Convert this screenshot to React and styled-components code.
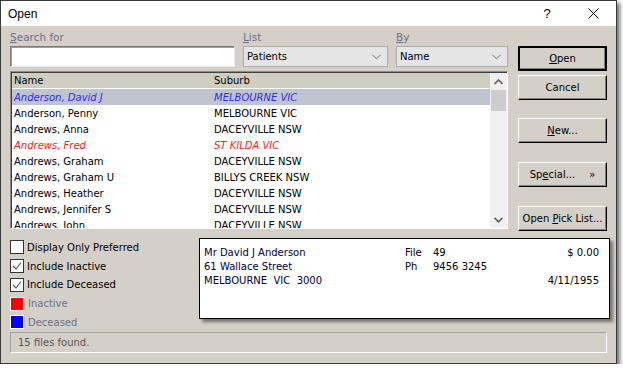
import React from "react"
import styled, { createGlobalStyle } from "styled-components"

const GlobalStyle = createGlobalStyle`
  body {
    margin: 0;
    background: #ffffff;
    font-family: "DejaVu Sans", "Liberation Sans", sans-serif;
    font-size: 10px;
  }
`

const Window = styled.div`
  width: 615px;
  height: 362px;
  border: 1px solid #3a3a3a;
  background: #d4d0c8;
  box-shadow: 3px 3px 4px rgba(0, 0, 0, 0.55);
  display: flex;
  flex-direction: column;
  overflow: hidden;
`

const TitleBar = styled.div`
  height: 25px;
  flex-shrink: 0;
  background: #ffffff;
  display: flex;
  align-items: center;
  padding: 0 0 0 7px;
  font-family: "Liberation Sans", sans-serif;
  font-size: 12px;
  color: #000;
`

const Title = styled.div`
  flex: 1;
`

const TitleButton = styled.div`
  width: 46px;
  height: 25px;
  display: flex;
  align-items: center;
  justify-content: center;
  font-size: 13px;
`

const Body = styled.div`
  padding: 5px 9px 0 9px;
  display: flex;
  flex-direction: column;
`

const TopArea = styled.div`
  display: grid;
  grid-template-columns: 498px 89px;
  column-gap: 10px;
`

const LeftCol = styled.div`
  display: flex;
  flex-direction: column;
`

const Filters = styled.div`
  display: flex;
  gap: 8px;
`

const Field = styled.div`
  display: flex;
  flex-direction: column;
  width: ${p => p.w}px;
`

const Label = styled.div`
  color: #6a6f8c;
  height: 15px;
  line-height: 13px;
  font-size: 10.5px;
  span {
    text-decoration: underline;
  }
`

const TextInput = styled.div`
  height: 19px;
  background: #fff;
  border: 1px solid #7a7a7a;
  border-right-color: #e8e8e8;
  border-bottom-color: #e8e8e8;
  box-shadow: inset 1px 1px 0 #a0a0a0;
`

const Select = styled.div`
  height: 19px;
  background: #e5e5e5;
  border: 1px solid #acacac;
  display: flex;
  align-items: center;
  justify-content: space-between;
  padding: 0 6px 0 3px;
  color: #000;
`

const ListBox = styled.div`
  margin-top: 4px;
  height: 156px;
  border: 1px solid #8a8a8a;
  border-right-color: #ffffff;
  border-bottom-color: #ffffff;
  box-shadow: inset 1px 1px 0 #404040;
  background: #fff;
  display: flex;
  overflow: hidden;
`

const ListMain = styled.div`
  flex: 1;
  display: flex;
  flex-direction: column;
  padding: 1px 0 0 1px;
  overflow: hidden;
`

const HeaderRow = styled.div`
  display: grid;
  grid-template-columns: 200px 1fr;
  height: 15px;
  flex-shrink: 0;
  align-items: center;
  background: #cfcfc1;
  padding-left: 2px;
  border-bottom: 1px solid #fff;
`

const Row = styled.div`
  display: grid;
  grid-template-columns: 200px 1fr;
  height: 16px;
  flex-shrink: 0;
  align-items: center;
  padding-left: 2px;
  background: ${p => (p.selected ? "#c0c4ce" : "transparent")};
  color: ${p => p.color || "#000"};
  font-style: ${p => (p.color ? "italic" : "normal")};
  white-space: nowrap;
`

const ScrollBar = styled.div`
  width: 17px;
  background: #f0f0f0;
  display: flex;
  flex-direction: column;
  align-items: center;
  margin-top: 1px;
`

const ScrollArrow = styled.div`
  height: 17px;
  width: 17px;
  flex-shrink: 0;
  display: flex;
  align-items: center;
  justify-content: center;
`

const Thumb = styled.div`
  width: 15px;
  height: 21px;
  flex-shrink: 0;
  background: #cdcdcd;
`

const ScrollSpace = styled.div`
  flex: 1;
`

const Buttons = styled.div`
  display: flex;
  flex-direction: column;
  padding-top: 15px;
`

const Button = styled.div`
  height: 25px;
  box-sizing: border-box;
  margin-top: ${p => p.gap || 0}px;
  background: #d4d0c8;
  border: ${p => (p.primary ? "2px solid #000" : "1px solid #fff")};
  border-right-color: #000;
  border-bottom-color: #000;
  box-shadow: inset -1px -1px 0 #808080;
  display: flex;
  align-items: center;
  justify-content: center;
  gap: 14px;
  color: #000;
  span {
    text-decoration: underline;
  }
`

const BottomArea = styled.div`
  display: grid;
  grid-template-columns: 189px 411px;
  margin-top: 7px;
`

const Options = styled.div`
  display: flex;
  flex-direction: column;
`

const OptionRow = styled.div`
  display: flex;
  align-items: center;
  height: 18.75px;
  gap: 3px;
  color: ${p => (p.muted ? "#6a6f8c" : "#000")};
`

const CheckBox = styled.div`
  width: 12px;
  height: 12px;
  border: 1px solid #333;
  background: #fff;
  display: flex;
  align-items: center;
  justify-content: center;
`

const Swatch = styled.div`
  width: 12px;
  height: 12px;
  background: ${p => p.color};
  border: 1px solid #fff;
  margin-right: 1px;
`

const InfoPanel = styled.div`
  box-sizing: border-box;
  height: 81px;
  background: #fff;
  border: 1px solid #000;
  box-shadow: 3px 3px 3px rgba(0, 0, 0, 0.45);
  display: grid;
  grid-template-columns: 201px 28px 1fr auto;
  grid-template-rows: repeat(3, 14px);
  padding: 7px 10px 0 4px;
  align-content: start;
`

const Cell = styled.div`
  color: ${p => (p.navy ? "#00003c" : "#000")};
  text-align: ${p => (p.right ? "right" : "left")};
  white-space: pre;
  line-height: 14px;
`

const StatusBar = styled.div`
  height: 19px;
  width: 588px;
  border: 1px solid #a0a0a0;
  border-right-color: #fff;
  border-bottom-color: #fff;
  display: flex;
  align-items: center;
  padding-left: 7px;
  color: #555;
`

const Chevron = ({ dark }) => (
  <svg width="9" height="6" viewBox="0 0 9 6">
    <path d="M0.5 0.8 L4.5 4.8 L8.5 0.8" fill="none" stroke={dark ? "#606060" : "#707070"} strokeWidth={dark ? 1.6 : 1} />
  </svg>
)

const UpChevron = () => (
  <svg width="9" height="6" viewBox="0 0 9 6">
    <path d="M0.5 5 L4.5 1 L8.5 5" fill="none" stroke="#606060" strokeWidth="1.6" />
  </svg>
)

const Tick = () => (
  <svg width="10" height="10" viewBox="0 0 10 10">
    <path d="M1 5 L4 8 L9 1.5" fill="none" stroke="#555" strokeWidth="1.1" />
  </svg>
)

const patients = [
  { name: "Anderson, David J", suburb: "MELBOURNE VIC", color: "#2a2aff", selected: true },
  { name: "Anderson, Penny", suburb: "MELBOURNE VIC" },
  { name: "Andrews, Anna", suburb: "DACEYVILLE NSW" },
  { name: "Andrews, Fred", suburb: "ST KILDA VIC", color: "#ff1a1a" },
  { name: "Andrews, Graham", suburb: "DACEYVILLE NSW" },
  { name: "Andrews, Graham U", suburb: "BILLYS CREEK NSW" },
  { name: "Andrews, Heather", suburb: "DACEYVILLE NSW" },
  { name: "Andrews, Jennifer S", suburb: "DACEYVILLE NSW" },
  { name: "Andrews, John", suburb: "DACEYVILLE NSW" },
]

const App = () => (
  <>
    <GlobalStyle />
    <Window>
      <TitleBar>
        <Title>Open</Title>
        <TitleButton>?</TitleButton>
        <TitleButton>
          <svg width="11" height="11" viewBox="0 0 11 11">
            <path d="M0.5 0.5 L10.5 10.5 M10.5 0.5 L0.5 10.5" stroke="#000" strokeWidth="1" />
          </svg>
        </TitleButton>
      </TitleBar>
      <Body>
        <TopArea>
          <LeftCol>
            <Filters>
              <Field w={225}>
                <Label><span>S</span>earch for</Label>
                <TextInput />
              </Field>
              <Field w={145}>
                <Label><span>L</span>ist</Label>
                <Select>Patients<Chevron /></Select>
              </Field>
              <Field w={112}>
                <Label><span>B</span>y</Label>
                <Select>Name<Chevron /></Select>
              </Field>
            </Filters>
            <ListBox>
              <ListMain>
                <HeaderRow>
                  <div>Name</div>
                  <div>Suburb</div>
                </HeaderRow>
                {patients.map(p => (
                  <Row key={p.name} selected={p.selected} color={p.color}>
                    <div>{p.name}</div>
                    <div>{p.suburb}</div>
                  </Row>
                ))}
              </ListMain>
              <ScrollBar>
                <ScrollArrow><UpChevron /></ScrollArrow>
                <Thumb />
                <ScrollSpace />
                <ScrollArrow><Chevron dark /></ScrollArrow>
              </ScrollBar>
            </ListBox>
          </LeftCol>
          <Buttons>
            <Button primary><div><span>O</span>pen</div></Button>
            <Button gap={4}>Cancel</Button>
            <Button gap={18}><div><span>N</span>ew...</div></Button>
            <Button gap={19}><div>Sp<span>e</span>cial...</div><div>»</div></Button>
            <Button gap={19}><div>Open <span>P</span>ick List...</div></Button>
          </Buttons>
        </TopArea>
        <BottomArea>
          <Options>
            <OptionRow><CheckBox />Display Only Preferred</OptionRow>
            <OptionRow><CheckBox><Tick /></CheckBox>Include Inactive</OptionRow>
            <OptionRow><CheckBox><Tick /></CheckBox>Include Deceased</OptionRow>
            <OptionRow muted><Swatch color="#ff0000" />Inactive</OptionRow>
            <OptionRow muted><Swatch color="#0000ff" />Deceased</OptionRow>
          </Options>
          <InfoPanel>
            <Cell navy>Mr David J Anderson</Cell>
            <Cell>File</Cell>
            <Cell>49</Cell>
            <Cell right>$ 0.00</Cell>
            <Cell navy>61 Wallace Street</Cell>
            <Cell>Ph</Cell>
            <Cell>9456 3245</Cell>
            <Cell />
            <Cell navy>{"MELBOURNE  VIC  3000"}</Cell>
            <Cell />
            <Cell />
            <Cell right>4/11/1955</Cell>
          </InfoPanel>
        </BottomArea>
        <StatusBar>15 files found.</StatusBar>
      </Body>
    </Window>
  </>
)

export default App
